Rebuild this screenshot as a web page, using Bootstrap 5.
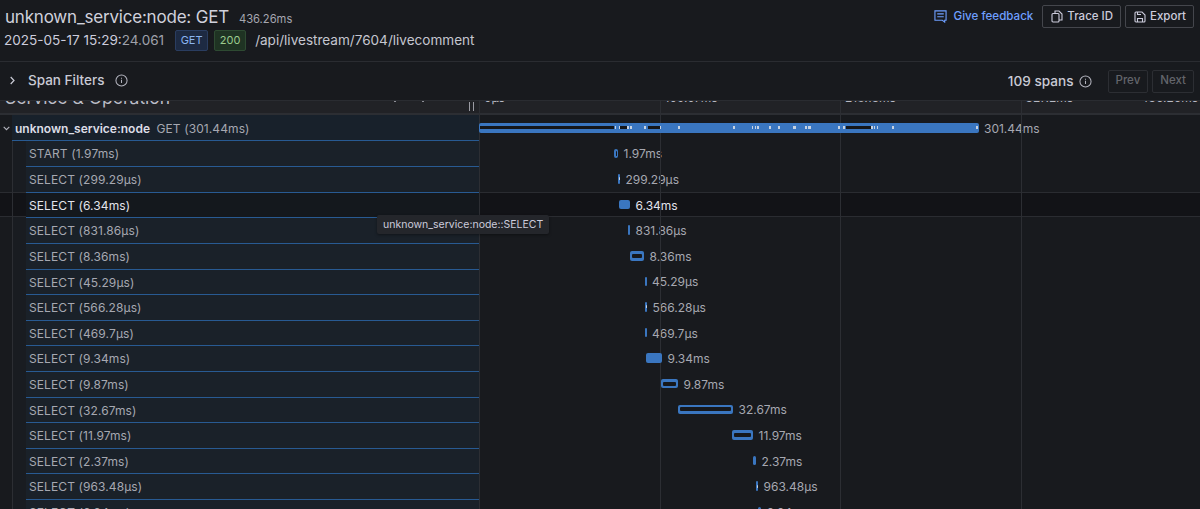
<!DOCTYPE html>
<html lang="en">
<head>
    <meta charset="UTF-8">
    <title>Trace</title>
    <link href="https://cdn.jsdelivr.net/npm/bootstrap@5.3.0/dist/css/bootstrap.min.css" rel="stylesheet">
    <style>
        html, body { height: 100%; }
        body {
            background-color: #181a1e;
            color: #ccccdc;
            font-family: Inter, "Liberation Sans", sans-serif;
            overflow: hidden;
        }
        .trace-head { height: 62px; padding: 6px 6px 0 5px; border-bottom: 1px solid #2a2c31; }
        .trace-title { font-size: 17px; line-height: 23px; letter-spacing: -.2px; color: #d0d1dc; }
        .trace-dur { font-size: 11.2px; color: #a5a7b0; margin-left: 10px; }
        .trace-sub { font-size: 13.55px; line-height: 21px; margin-top: 1px; margin-left: -1px; }
        .trace-sub .dim { color: #9fa1ab; }
        .tag-get, .tag-ok { font-size: 11px; line-height: 19px; height: 21px; border-radius: 2px; border: 1px solid; text-align: center; }
        .tag-get { background: #1d2a42; border-color: #2a3d60; color: #8ab4f0; width: 33px; margin-left: 11px; }
        .tag-ok { background: #1f3323; border-color: #2e4a32; color: #9ccb8e; width: 32px; margin-left: 6px; }
        .trace-path { margin-left: 9px; color: #c5c6d0; }
        .head-right { margin-top: -1px; }
        .feedback { height: 23px; color: #6e9fff; font-size: 11.6px; font-weight: 500; text-decoration: none; margin-right: 5px; gap: 7px; }
        .tool-btn { height: 23px; font-size: 11.5px; font-weight: 500; color: #ccccdc; border: 1px solid #44464c; border-radius: 2px; padding: 0 7px 0 8px; background: transparent; display: flex; align-items: center; gap: 4px; }
        .filter-bar { height: 38px; padding: 0 6px 2px 10px; }
        .filter-name { font-size: 13.5px; font-weight: 500; margin-left: 13px; margin-right: 11px; color: #c9cad5; }
        .filter-right { margin-top: 2px; }
        .spans-count { font-size: 13.6px; font-weight: 500; color: #c9cad5; margin-right: 5px; }
        .nav-btn { height: 23px; font-size: 11.5px; font-weight: 500; color: #63656b; border: 1px solid #2c2e33; border-radius: 2px; padding: 0 7px; background: transparent; }
        .nav-prev { margin-left: 16px; margin-right: 4px; }
        .ico-muted { color: #b3b4be; }
        .view-wrap { position: relative; }
        .grid-line { position: absolute; top: 0; bottom: 0; width: 1px; background: #2c2e33; z-index: 3; pointer-events: none; }
        .head-row { height: 15px; overflow: hidden; background: #212226; border-top: 1px solid #2a2c31; border-bottom: 2px solid #2c2e33; display: flex; }
        .head-left { width: 479px; flex: none; position: relative; display: flex; align-items: flex-end; justify-content: space-between; padding: 0 5px; }
        .head-left span.cut { font-size: 17.5px; line-height: 22px; height: 22px; margin-bottom: 4px; color: #bdbec8; white-space: nowrap; }
        .head-cols { flex: 1; display: flex; }
        .tick-label { width: 180.5px; flex: none; padding-left: 5px; font-size: 12px; line-height: 14px; height: 14px; margin-top: -10px; color: #b9bac4; white-space: nowrap; }
        .tick-last { flex: 1; min-width: 0; width: auto; display: flex; justify-content: space-between; padding-right: 2px; }
        .divider-mark { width: 5px; height: 9px; margin-bottom: 2px; border-left: 1px solid #9a9ba3; border-right: 1px solid #9a9ba3; }
        .head-tip { position: absolute; top: 0; width: 2px; height: 1px; background: #8d8e96; }
        .span-row { display: flex; height: 25.6px; }
        .span-row.picked { background: #121317; box-shadow: inset 0 1px 0 #2a2c31, inset 0 -1px 0 #2a2c31; }
        .span-left { width: 479px; flex: none; display: flex; overflow: hidden; }
        .span-gutter { width: 26px; flex: none; position: relative; background: linear-gradient(90deg, transparent 12px, #2c2e33 12px, #2c2e33 13px, #191c21 13px); }
        .span-row.picked .span-gutter { background: linear-gradient(90deg, transparent 12px, #2c2e33 12px, #2c2e33 13px, transparent 13px); }
        .span-name-cell { flex: 1; padding-left: 3px; background: #1a2129; border-top: 1px solid #285a92; font-size: 12px; line-height: 26px; color: #a6a8b1; white-space: nowrap; letter-spacing: .1px; }
        .span-row.root .span-gutter { width: 12px; background: none; padding-left: 3px; line-height: 24px; }
        .span-row.root .span-name-cell { padding-left: 3px; line-height: 27px; border-top: 0; border-bottom: 1px solid #285a92; background: #18212b; }
        .span-row.root .svc { color: #dcdde6; font-weight: 600; margin-right: 3px; letter-spacing: 0; }
        .span-row.root + .span-row .span-name-cell { border-top: 0; }
        .span-row.picked .span-name-cell { background: #14181d; color: #e3e4ec; }
        .span-track { flex: 1; display: flex; align-items: center; font-size: 12px; color: #a6a8b1; white-space: nowrap; }
        .span-row.picked .span-track { color: #e3e4ec; }
        .bar { height: 9.5px; border-radius: 2px; background: #3a76c0; flex: none; display: flex; align-items: center; position: relative; z-index: 4; }
        .bar-inner { display: block; height: 4px; margin: 0 2px; flex: 1; background: #16181c; border-radius: 1px; }
        .bar-inner.tiny { margin: 0 1.5px; height: 5px; }
        .bar-inner.light { margin: 0 .5px; height: 3px; background: #c6d2e2; }
        .bar-label { margin-left: 5.5px; margin-top: 2px; }
        .bar-gap { position: absolute; top: 3.5px; height: 3px; background: #c6d2e2; }
        .bar-gap.black { background: #14161a; }
        .span-tip { position: absolute; left: 377px; top: 115px; height: 19px; background: #24262b; color: #ccccdc; font-size: 10.5px; line-height: 19px; padding: 0 6px; border-radius: 2px; z-index: 6; white-space: nowrap; box-shadow: 0 1px 3px rgba(0,0,0,.4); }
    </style>
</head>
<body>
    <div class="trace-head d-flex justify-content-between">
        <div>
            <div class="d-flex align-items-baseline">
                <span class="trace-title">unknown_service:node: GET</span>
                <span class="trace-dur">436.26ms</span>
            </div>
            <div class="trace-sub d-flex align-items-center">
                <span>2025-05-17 15:29:<span class="dim">24.061</span></span>
                <span class="tag-get">GET</span>
                <span class="tag-ok">200</span>
                <span class="trace-path">/api/livestream/7604/livecomment</span>
            </div>
        </div>
        <div class="head-right d-flex align-items-start gap-1">
            <a href="#" class="feedback d-flex align-items-center">
                <svg width="13" height="13" viewBox="0 0 14 14" fill="none" stroke="#6e9fff" stroke-width="1.2"><path d="M1 1h12v10h-1.5v2l-2.5-2H1z"/><path d="M3.5 4.2h7M3.5 7.2h7"/></svg>
                Give feedback
            </a>
            <button class="tool-btn">
                <svg width="12" height="13" viewBox="0 0 12 13" fill="none" stroke="#ccccdc" stroke-width="1.1"><path d="M4 3V1h4l3 3v6H8"/><rect x="1" y="3.5" width="7" height="8.5" rx="1"/></svg>
                Trace ID
            </button>
            <button class="tool-btn">
                <svg width="12" height="12" viewBox="0 0 12 12" fill="none" stroke="#ccccdc" stroke-width="1.1"><path d="M1 2a1 1 0 0 1 1-1h6l3 3v6a1 1 0 0 1-1 1H2a1 1 0 0 1-1-1z"/><path d="M3.5 11V7.5h5V11M3.5 1v2.5h3.5"/></svg>
                Export
            </button>
        </div>
    </div>

    <div class="filter-bar d-flex align-items-center justify-content-between">
        <div class="d-flex align-items-center">
            <svg width="5" height="9" viewBox="0 0 5 9" fill="none" stroke="#c9cad5" stroke-width="1.2"><path d="M.7 1l3.3 3.5L.7 8"/></svg>
            <span class="filter-name">Span Filters</span>
            <svg class="ico-muted" width="13" height="13" viewBox="0 0 14 14" fill="none" stroke="currentColor" stroke-width="1.1"><circle cx="7" cy="7" r="6"/><path d="M7 6.2v3.6M7 4v1.1"/></svg>
        </div>
        <div class="filter-right d-flex align-items-center">
            <span class="spans-count">109 spans</span>
            <svg class="ico-muted" width="13" height="13" viewBox="0 0 14 14" fill="none" stroke="currentColor" stroke-width="1.1"><circle cx="7" cy="7" r="6"/><path d="M7 6.2v3.6M7 4v1.1"/></svg>
            <button class="nav-btn nav-prev">Prev</button>
            <button class="nav-btn">Next</button>
        </div>
    </div>

    <div class="view-wrap">
        <div class="head-row">
            <div class="head-left">
                <span class="cut">Service &amp; Operation</span>
                <span class="head-tip" style="left:394px"></span>
                <span class="head-tip" style="left:422px"></span>
                <span class="divider-mark"></span>
            </div>
            <div class="head-cols">
                <span class="tick-label">0μs</span>
                <span class="tick-label">109.07ms</span>
                <span class="tick-label">218.13ms</span>
                <span class="tick-label tick-last"><span>327.2ms</span><span>436.26ms</span></span>
            </div>
        </div>
        <div id="rows"></div>
        <div class="grid-line" style="left:479px"></div>
        <div class="grid-line" style="left:660px"></div>
        <div class="grid-line" style="left:840px"></div>
        <div class="grid-line" style="left:1021px"></div>
        <div class="span-tip">unknown_service:node::SELECT</div>
    </div>

    <script>
        // x, width in pixels of the timeline, then what the bar has inside
        const spans = [
            ['START', '1.97ms', 135, 4, 'tiny'],
            ['SELECT', '299.29μs', 139, 2, 'light'],
            ['SELECT', '6.34ms', 140, 11, ''],
            ['SELECT', '831.86μs', 149, 2, ''],
            ['SELECT', '8.36ms', 151, 14, 'x'],
            ['SELECT', '45.29μs', 166, 1.5, ''],
            ['SELECT', '566.28μs', 166, 2, 'light'],
            ['SELECT', '469.7μs', 166, 1.5, ''],
            ['SELECT', '9.34ms', 167, 16, ''],
            ['SELECT', '9.87ms', 182, 17, 'x'],
            ['SELECT', '32.67ms', 199, 55, 'x'],
            ['SELECT', '11.97ms', 253, 21, 'x'],
            ['SELECT', '2.37ms', 274, 3, ''],
            ['SELECT', '963.48μs', 277, 2, 'light'],
            ['SELECT', '6.94ms', 279, 3, '']
        ];
        // marks on the root bar: left, width, dark or light
        const gaps = [
            [1, 133.5, 1], [135.5, 1, 0], [139.5, 1, 0], [140.5, 7.5, 1], [148, 1.5, 0], [151, 1.5, 0], [165, 2, 0], [168.5, 12.5, 1], [181, 1, 0],
            [199, 2, 0], [254, 2, 0], [273, 1, 0], [275.5, 1, 0], [278, 2, 0], [290, 2, 0], [299, 2, 0],
            [314, 3, 0], [326, 2, 0], [329, 3, 0], [359, 2, 0], [364, 2, 0], [367, 24.5, 1], [392, 2, 0], [395, 1, 0], [398, 1, 0], [413, 2, 0], [497, 1.5, 0]
        ];

        let html = `
            <div class="span-row root">
                <div class="span-left">
                    <div class="span-gutter"><svg width="7" height="5" viewBox="0 0 7 5" fill="none" stroke="#b3b4be" stroke-width="1.1"><path d="M.7 .8l2.8 2.8L6.3 .8"/></svg></div>
                    <div class="span-name-cell"><span class="svc">unknown_service:node</span> GET (301.44ms)</div>
                </div>
                <div class="span-track">
                    <div class="bar" style="width:499.5px;height:10px;">${gaps.map(g => `<span class="bar-gap ${g[2] ? 'black' : ''}" style="left:${g[0]}px;width:${g[1]}px"></span>`).join('')}</div>
                    <span class="bar-label">301.44ms</span>
                </div>
            </div>`;
        spans.forEach((s, i) => {
            const inner = s[4] ? `<span class="bar-inner ${s[4]}"></span>` : '';
            html += `
            <div class="span-row ${i === 2 ? 'picked' : ''}">
                <div class="span-left">
                    <div class="span-gutter"></div>
                    <div class="span-name-cell">${s[0]} (${s[1]})</div>
                </div>
                <div class="span-track">
                    <div class="bar" style="margin-left:${s[2]}px;width:${s[3]}px">${inner}</div>
                    <span class="bar-label">${s[1]}</span>
                </div>
            </div>`;
        });
        document.getElementById('rows').innerHTML = html;
    </script>
    <script src="https://cdn.jsdelivr.net/npm/bootstrap@5.3.0/dist/js/bootstrap.bundle.min.js"></script>
</body>
</html>
